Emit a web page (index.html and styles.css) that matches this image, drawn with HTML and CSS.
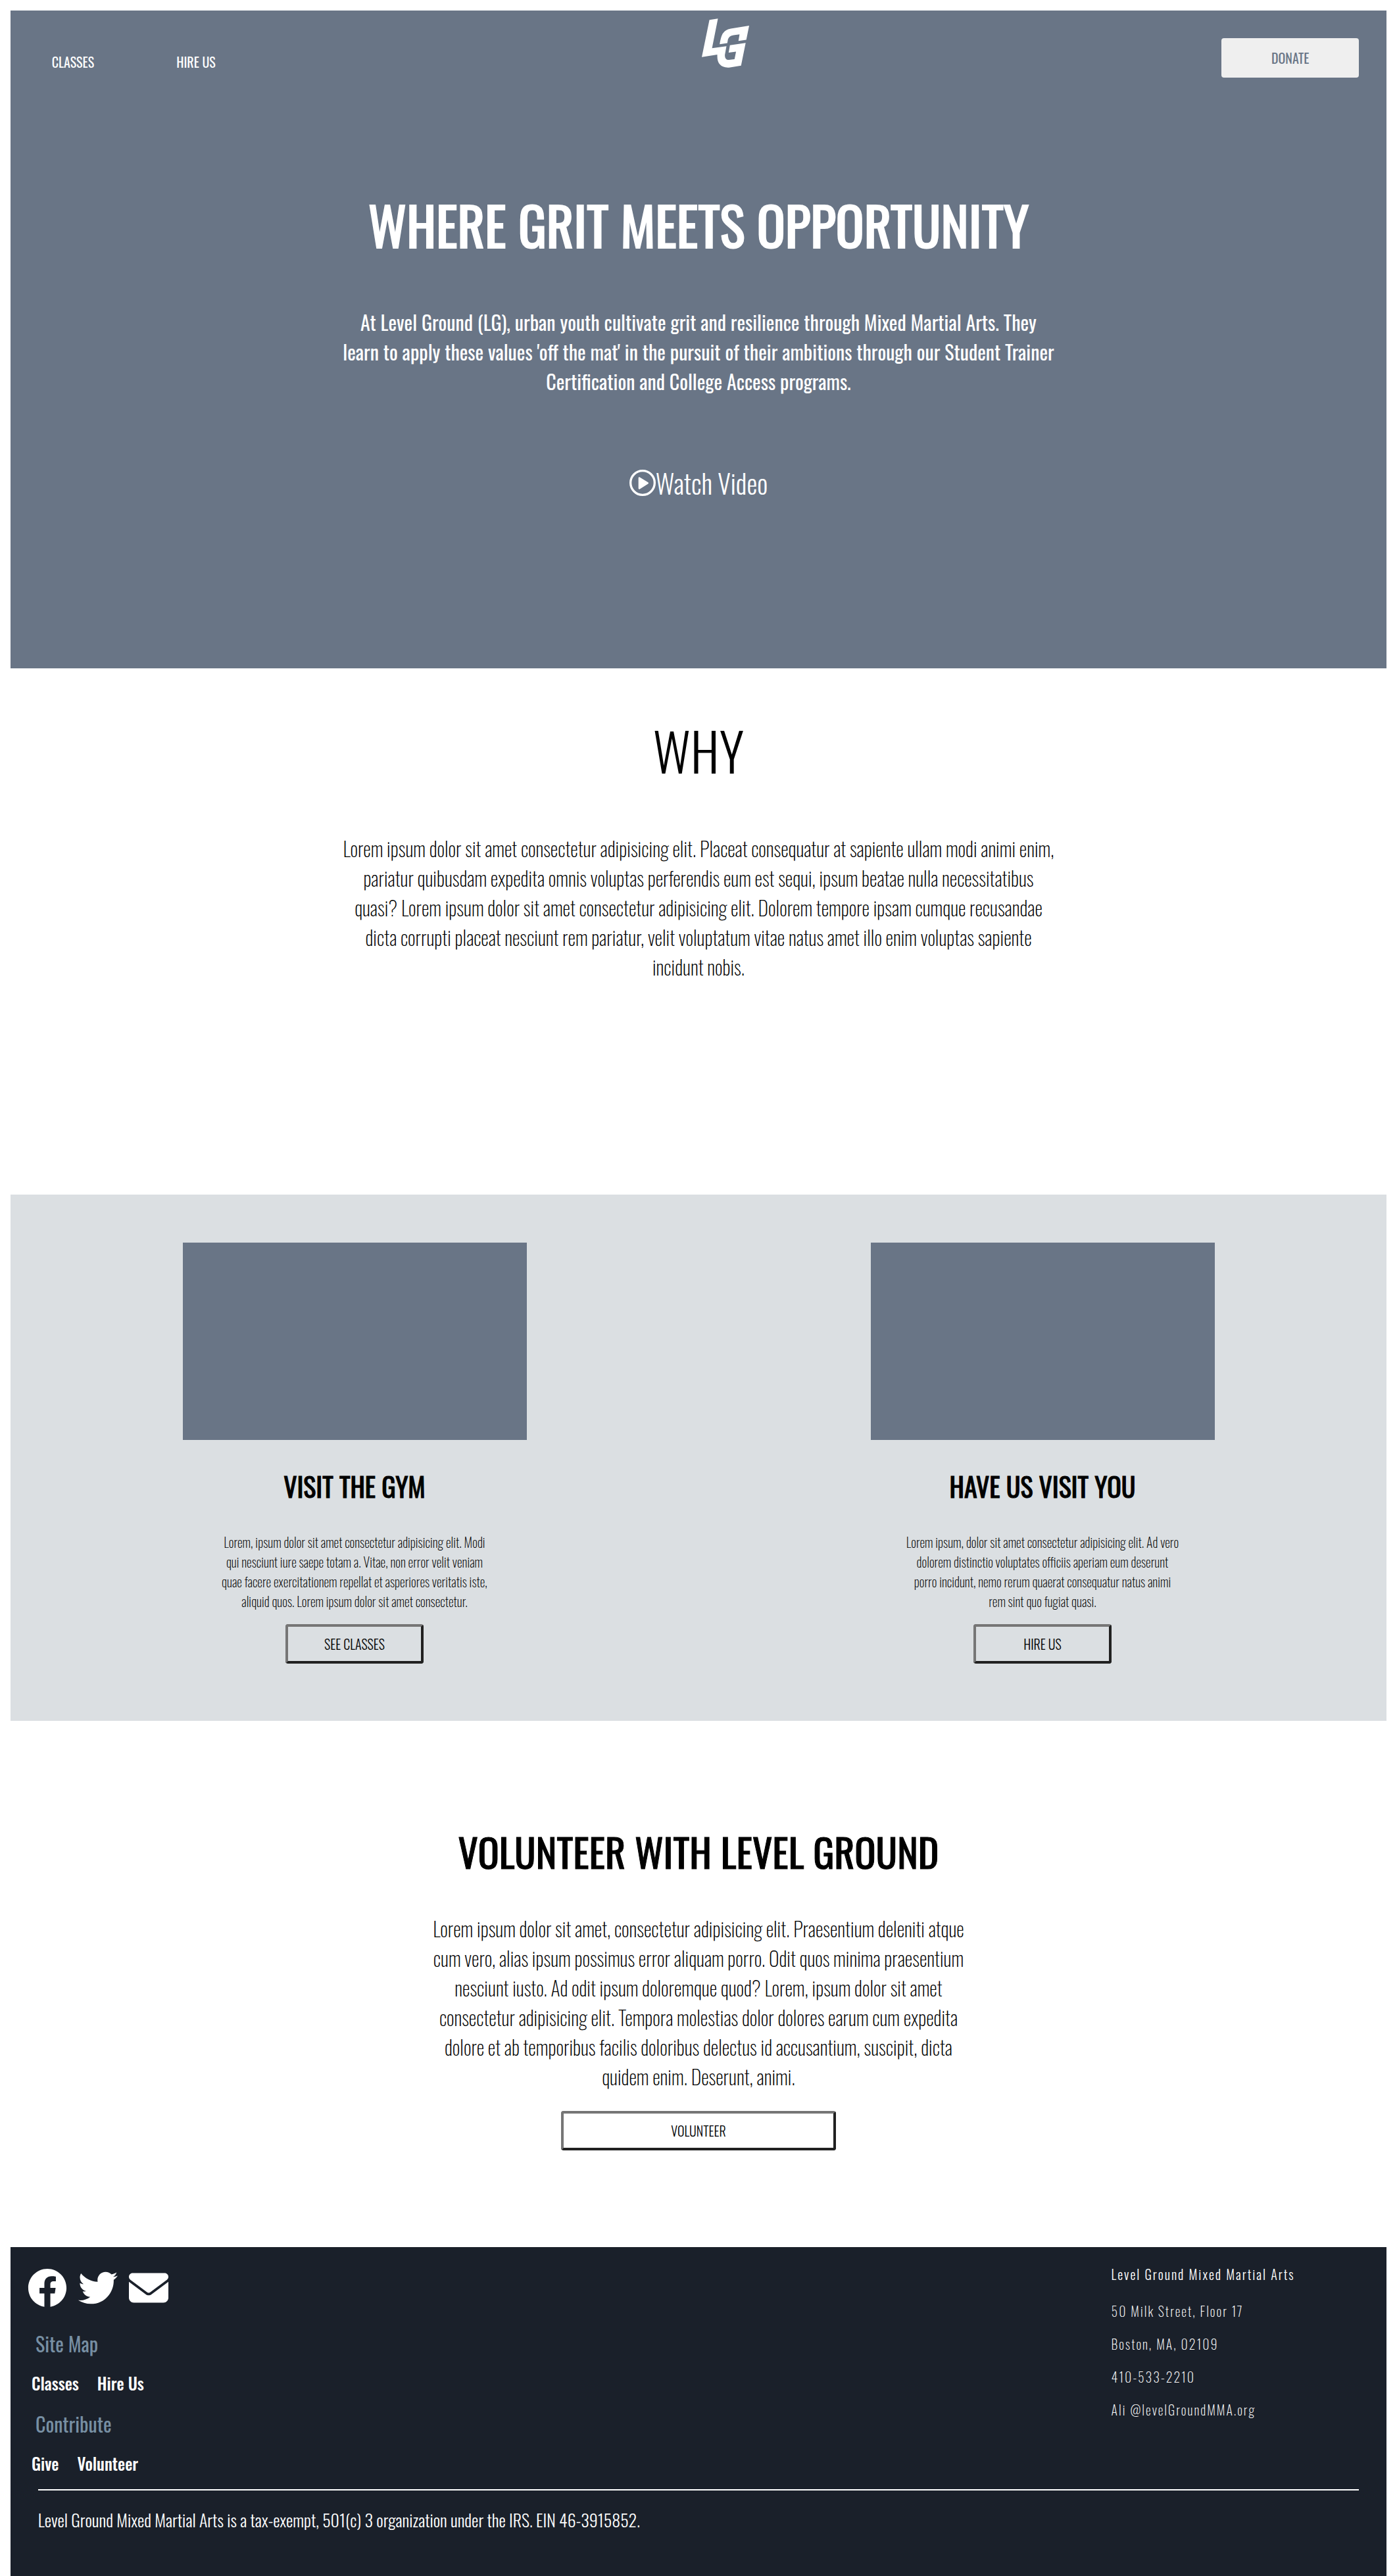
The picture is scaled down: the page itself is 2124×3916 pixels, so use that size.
FILE: index.html
```
<!DOCTYPE html>
<html lang="en">
<head>
  <meta charset="utf-8">
  <meta name="viewport" content="width=device-width, initial-scale=1">
  <title>Level Ground Mixed Martial Arts</title>
  <link rel="stylesheet" href="styles.css">
</head>
<body>
  <section class="hero">
    <header class="topbar">
      <nav class="topbar-nav">
        <a href="#classes">CLASSES</a>
        <a href="#hire">HIRE US</a>
      </nav>
      <div class="topbar-brand">
        <a href="#" aria-label="Level Ground home">
          <svg viewBox="200 84 217 224" width="72" height="75" fill="#fff" aria-hidden="true">
            <path d="M235 90 274 84 247 219 313 210 306 249Q304 274 324 273L350 270 357 235 323 240 329 206 401 195 380 299 325 308Q296 310 281 292 270 278 271 249L200 260Z"/>
            <path d="M282 201Q286 172 295 154 307 134 333 130L417 116 404 181 368 186 373 156 345 160Q325 163 320 179L317 196Z"/>
          </svg>
        </a>
        <button class="donate" type="button">DONATE</button>
      </div>
    </header>
    <h1 class="hero-title">WHERE GRIT MEETS OPPORTUNITY</h1>
    <p class="hero-text">At Level Ground (LG), urban youth cultivate grit and resilience through Mixed Martial Arts. They learn to apply these values 'off the mat' in the pursuit of their ambitions through our Student Trainer Certification and College Access programs.</p>
    <a class="watch" href="#video">
      <svg viewBox="0 0 120 120" width="40" height="40" aria-hidden="true">
        <circle cx="60" cy="60" r="55" fill="none" stroke="#fff" stroke-width="10"/>
        <path d="M45 38 83 61 45 85Z" fill="#fff" stroke="#fff" stroke-width="8" stroke-linejoin="round"/>
      </svg>
      <span>Watch Video</span>
    </a>
  </section>

  <section class="why">
    <h2 class="why-title">WHY</h2>
    <p class="why-text">Lorem ipsum dolor sit amet consectetur adipisicing elit. Placeat consequatur at sapiente ullam modi animi enim, pariatur quibusdam expedita omnis voluptas perferendis eum est sequi, ipsum beatae nulla necessitatibus quasi? Lorem ipsum dolor sit amet consectetur adipisicing elit. Dolorem tempore ipsam cumque recusandae dicta corrupti placeat nesciunt rem pariatur, velit voluptatum vitae natus amet illo enim voluptas sapiente incidunt nobis.</p>
  </section>

  <section class="cards">
    <article class="card" id="classes">
      <div class="card-image"></div>
      <h2 class="card-title">VISIT THE GYM</h2>
      <p class="card-text">Lorem, ipsum dolor sit amet consectetur adipisicing elit. Modi qui nesciunt iure saepe totam a. Vitae, non error velit veniam quae facere exercitationem repellat et asperiores veritatis iste, aliquid quos. Lorem ipsum dolor sit amet consectetur.</p>
      <button class="outline-button" type="button">SEE CLASSES</button>
    </article>
    <article class="card" id="hire">
      <div class="card-image"></div>
      <h2 class="card-title">HAVE US VISIT YOU</h2>
      <p class="card-text">Lorem ipsum, dolor sit amet consectetur adipisicing elit. Ad vero dolorem distinctio voluptates officiis aperiam eum deserunt porro incidunt, nemo rerum quaerat consequatur natus animi rem sint quo fugiat quasi.</p>
      <button class="outline-button" type="button">HIRE US</button>
    </article>
  </section>

  <section class="volunteer" id="volunteer">
    <h2 class="volunteer-title">VOLUNTEER WITH LEVEL GROUND</h2>
    <p class="volunteer-text">Lorem ipsum dolor sit amet, consectetur adipisicing elit. Praesentium deleniti atque cum vero, alias ipsum possimus error aliquam porro. Odit quos minima praesentium nesciunt iusto. Ad odit ipsum doloremque quod? Lorem, ipsum dolor sit amet consectetur adipisicing elit. Tempora molestias dolor dolores earum cum expedita dolore et ab temporibus facilis doloribus delectus id accusantium, suscipit, dicta quidem enim. Deserunt, animi.</p>
    <button class="outline-button wide" type="button">VOLUNTEER</button>
  </section>

  <footer class="footer">
    <div class="footer-columns">
      <div class="footer-site">
        <div class="social">
          <a href="#facebook" aria-label="Facebook"><svg viewBox="0 0 512 512" width="60" height="60" fill="#fff" aria-hidden="true"><path d="M504 256C504 119 393 8 256 8S8 119 8 256c0 123.780 90.690 226.380 209.250 245V327.690h-63V256h63v-54.640c0-62.150 37-96.480 93.670-96.480 27.140 0 55.520 4.840 55.520 4.840v61h-31.280c-30.800 0-40.410 19.120-40.410 38.730V256h68.780l-11 71.690h-57.780V501C413.310 482.380 504 379.780 504 256z"/></svg></a>
          <a href="#twitter" aria-label="Twitter"><svg viewBox="0 0 512 512" width="60" height="60" fill="#fff" aria-hidden="true"><path d="M459.370 151.716c.325 4.548.325 9.097.325 13.645 0 138.720-105.583 298.558-298.558 298.558-59.452 0-114.680-17.219-161.137-47.106 8.447.974 16.568 1.299 25.340 1.299 49.055 0 94.213-16.568 130.274-44.832-46.132-.975-84.792-31.188-98.112-72.772 6.498.974 12.995 1.624 19.818 1.624 9.421 0 18.843-1.300 27.614-3.573-48.081-9.747-84.143-51.980-84.143-102.985v-1.299c13.969 7.797 30.214 12.670 47.431 13.319-28.264-18.843-46.781-51.005-46.781-87.391 0-19.492 5.197-37.360 14.294-52.954 51.655 63.675 129.300 105.258 216.365 109.807-1.624-7.797-2.599-15.918-2.599-24.040 0-57.828 46.782-104.934 104.934-104.934 30.213 0 57.502 12.670 76.670 33.137 23.715-4.548 46.456-13.320 66.599-25.340-7.798 24.366-24.366 44.833-46.132 57.827 21.117-2.273 41.584-8.122 60.426-16.243-14.292 20.791-32.161 39.308-52.628 54.253z"/></svg></a>
          <a href="#email" aria-label="Email"><svg viewBox="0 0 512 512" width="60" height="60" fill="#fff" aria-hidden="true"><path d="M48 64C21.500 64 0 85.500 0 112c0 15.100 7.100 29.300 19.200 38.400L236.800 313.600c11.400 8.500 27 8.500 38.400 0L492.800 150.400c12.100-9.100 19.200-23.300 19.200-38.400 0-26.500-21.500-48-48-48H48zM0 176V384c0 35.300 28.700 64 64 64H448c35.300 0 64-28.700 64-64V176L294.400 339.200c-22.800 17.100-54 17.100-76.800 0L0 176z"/></svg></a>
        </div>
        <h3 class="footer-heading">Site Map</h3>
        <nav class="footer-links"><a href="#classes">Classes</a><a href="#hire">Hire Us</a></nav>
        <h3 class="footer-heading">Contribute</h3>
        <nav class="footer-links"><a href="#give">Give</a><a href="#volunteer">Volunteer</a></nav>
      </div>
      <address class="contact">
        <p class="contact-name">Level Ground Mixed Martial Arts</p>
        <p>50 Milk Street, Floor 17</p>
        <p>Boston, MA, 02109</p>
        <p>410-533-2210</p>
        <p>Ali @levelGroundMMA.org</p>
      </address>
    </div>
    <p class="legal">Level Ground Mixed Martial Arts is a tax-exempt, 501(c) 3 organization under the IRS. EIN 46-3915852.</p>
  </footer>
</body>
</html>
```
FILE: styles.css
```
* {
  box-sizing: border-box;
}

body {
  margin: 16px 16px 0;
  background: #fff;
  color: #000;
  font-family: Oswald, "Roboto Condensed", "Liberation Sans", sans-serif;
  font-size: 20px;
  font-weight: 200;
  line-height: 30px;
}

h1, h2, h3, p {
  margin: 0;
}

a {
  color: inherit;
  text-decoration: none;
}

button {
  font: inherit;
  font-weight: 300;
  height: 60px;
  padding: 0;
  border-radius: 4px;
  cursor: pointer;
}

svg {
  display: block;
}

/* Hero */
.hero {
  display: flex;
  flex-direction: column;
  align-items: center;
  min-height: 1000px;
  background: #697586;
  color: #fff;
  text-align: center;
}

.topbar {
  display: grid;
  grid-template-columns: 1fr 1fr;
  align-items: start;
  width: 100%;
  padding-top: 12px;
}

.topbar-nav {
  display: flex;
  gap: 125px;
  padding: 51px 0 0 6%;
  font-weight: 400;
}

.topbar-brand {
  display: flex;
  justify-content: space-between;
  align-items: flex-start;
  padding: 0 4% 0 5px;
}

.donate {
  width: 209px;
  margin-top: 30px;
  border: 0;
  background: #efefef;
  color: #697586;
  font-weight: 400;
}

.hero-title {
  margin-top: 163px;
  font-size: 80px;
  font-weight: 400;
  line-height: 120px;
  -webkit-text-stroke: 2px;
}

.hero-text {
  width: 52%;
  margin-top: 66px;
  font-size: 30px;
  font-weight: 400;
  line-height: 45px;
}

.watch {
  display: flex;
  align-items: center;
  margin-top: 102px;
  font-size: 40px;
  font-weight: 300;
  line-height: 60px;
}

/* Why */
.why {
  display: flex;
  flex-direction: column;
  align-items: center;
  min-height: 800px;
  padding-top: 64px;
  text-align: center;
}

.why-title {
  font-size: 80px;
  font-weight: 300;
  line-height: 120px;
}

.why-text {
  width: 52%;
  margin-top: 67px;
  font-size: 30px;
  line-height: 45px;
}

/* Cards */
.cards {
  display: grid;
  grid-template-columns: 1fr 1fr;
  min-height: 800px;
  padding-top: 73px;
  background: #dbdfe2;
  text-align: center;
}

.card {
  display: flex;
  flex-direction: column;
  align-items: center;
}

.card-image {
  width: 50%;
  height: 300px;
  background: #697586;
}

.card-title {
  margin-top: 40px;
  font-size: 40px;
  font-weight: 400;
  line-height: 60px;
  -webkit-text-stroke: 1px;
}

.card-text {
  width: 40%;
  margin-top: 40px;
}

.outline-button {
  width: 210px;
  margin-top: 20px;
  border: 4px solid;
  border-color: #767676 #212121 #212121 #767676;
  background: transparent;
  color: #000;
}

/* Volunteer */
.volunteer {
  display: flex;
  flex-direction: column;
  align-items: center;
  min-height: 800px;
  padding-top: 153px;
  text-align: center;
}

.volunteer-title {
  font-size: 60px;
  font-weight: 400;
  line-height: 90px;
  -webkit-text-stroke: 1px;
}

.volunteer-text {
  width: 40%;
  margin-top: 50px;
  font-size: 30px;
  line-height: 45px;
}

.outline-button.wide {
  width: 20%;
  margin-top: 30px;
}

/* Footer */
.footer {
  min-height: 500px;
  padding-top: 26px;
  background: #1a202a;
  color: #fff;
}

.footer-columns {
  display: grid;
  grid-template-columns: 4fr 1fr;
}

.footer-site {
  padding: 6px 0 0 26px;
}

.social {
  display: flex;
  gap: 17px;
  margin-bottom: 32px;
}

.footer-heading {
  padding-left: 12px;
  color: #778fa3;
  font-size: 30px;
  font-weight: 400;
  line-height: 45px;
}

.footer-links {
  display: flex;
  gap: 28px;
  padding: 19px 6px 20px;
  font-size: 25px;
  font-weight: 500;
  line-height: 38px;
}

.contact {
  font-style: normal;
  letter-spacing: 2px;
}

.contact p {
  margin-bottom: 20px;
}

.contact .contact-name {
  margin-bottom: 26px;
  font-weight: 300;
}

.legal {
  margin: 0 2%;
  padding-top: 26px;
  border-top: 2px solid #fff;
  font-size: 26px;
  font-weight: 300;
  line-height: 38px;
}
```
